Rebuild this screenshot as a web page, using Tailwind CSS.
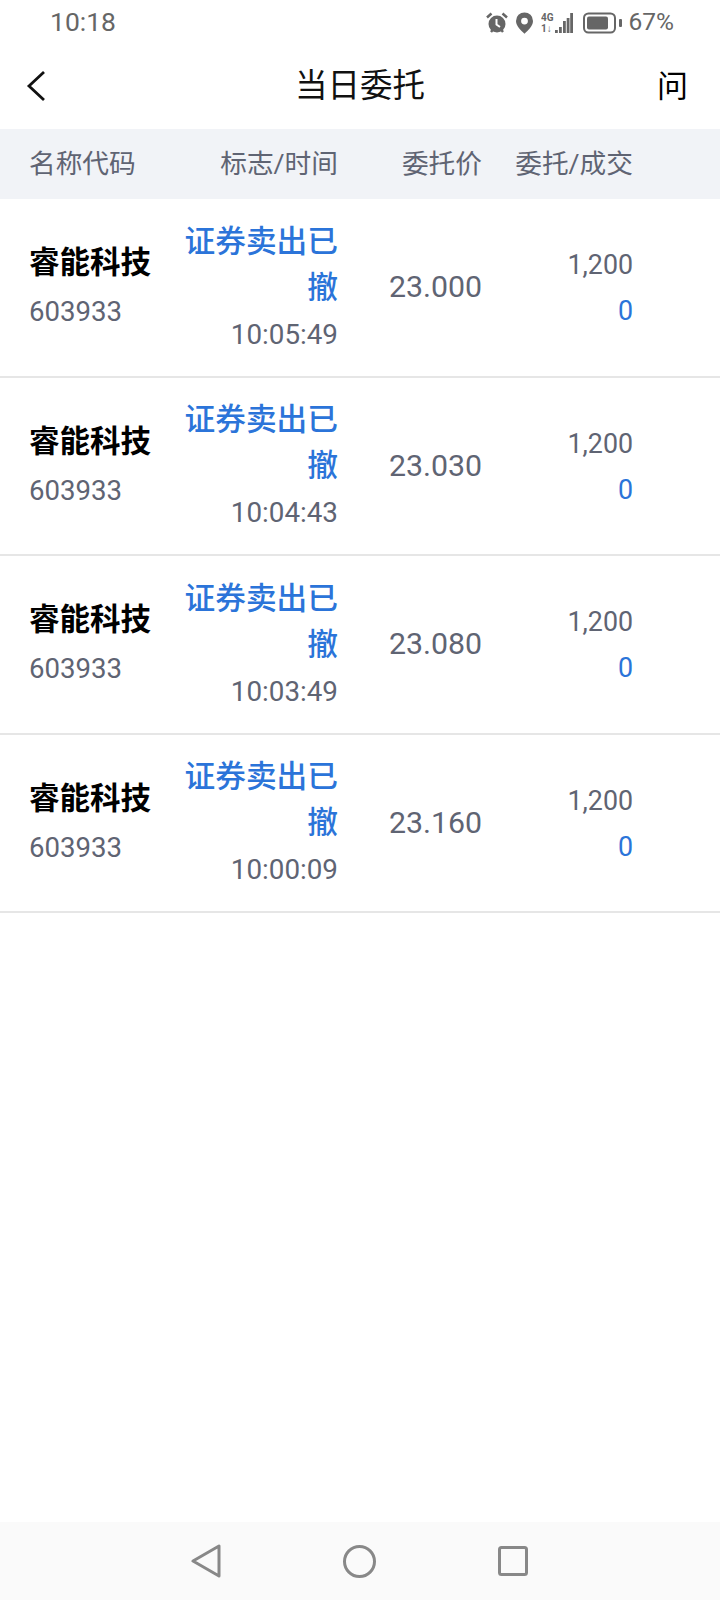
<!DOCTYPE html>
<html lang="en">
  <head>
    <meta charset="UTF-8" />
    <meta name="viewport" content="width=device-width, initial-scale=1.0" />
    <title>当日委托</title>
    <script src="https://cdn.jsdelivr.net/npm/@tailwindcss/browser@4"></script>
  </head>
  <body class="bg-white">
    <div class="w-[720px] h-[1600px] flex flex-col font-['Roboto','Noto_Sans_CJK_SC',sans-serif] text-[#5f6473]">
      <!-- status bar -->
      <div class="h-[45px] flex items-center pl-[50px] pr-[46px] text-[#666666]">
        <span class="text-[26.500px] leading-none">10:18</span>
        <div class="ml-auto flex items-center">
          <svg width="22" height="22" viewBox="1 1 22 22" fill="#666666">
            <circle cx="12" cy="13" r="8.500" />
            <path d="M2 6.500 6.500 2.500M22 6.500 17.500 2.500M6 21l2-2.500M18 21l-2-2.500" stroke="#666666" stroke-width="2.500" fill="none" />
            <path d="M11.500 8v5.500l3.500 2.500" stroke="#ffffff" stroke-width="2" fill="none" />
          </svg>
          <svg class="ml-[8px]" width="17" height="22" viewBox="1 2 16 20" fill="#666666">
            <path fill-rule="evenodd" d="M9 2a8 8 0 0 0-8 8c0 5 5 9 8 12 3-3 8-7 8-12a8 8 0 0 0-8-8Zm0 5a3.200 3.200 0 1 1 0 6.400A3.200 3.200 0 0 1 9 7Z" />
          </svg>
          <svg class="ml-[8px]" width="32" height="22" viewBox="0 0 32 22" fill="#666666">
            <text x="0" y="9" font-size="10" font-weight="700" font-family="Roboto">4G</text>
            <text x="0" y="20" font-size="10" font-weight="700" font-family="Roboto">1↓</text>
            <rect x="14" y="18" width="2.800" height="3" />
            <rect x="18" y="15" width="2.800" height="6" />
            <rect x="22" y="9" width="2.800" height="12" />
            <rect x="25.700" y="6" width="2.800" height="15" />
            <rect x="29.200" y="1" width="2.800" height="20" />
          </svg>
          <svg class="ml-[10px]" width="39" height="22" viewBox="0 0 39 22" fill="none">
            <rect x="1" y="1.500" width="31" height="19" rx="4.500" stroke="#666666" stroke-width="2" />
            <rect x="4" y="4.500" width="21" height="13" rx="2" fill="#666666" />
            <rect x="36" y="7" width="3" height="8" rx="1" fill="#666666" />
          </svg>
          <span class="ml-[7px] text-[24.500px] leading-none">67%</span>
        </div>
      </div>

      <!-- nav -->
      <div class="h-[84px] flex items-center justify-between pl-[26px] pr-[32px] pb-[2px] relative">
        <svg width="20" height="32" viewBox="0 0 20 32" fill="none">
          <path d="M18 2 3 16l15 14" stroke="#111111" stroke-width="2.800" />
        </svg>
        <span class="absolute inset-x-0 text-center text-[32.500px] text-[#111111]">当日委托</span>
        <span class="text-[31px] text-black pt-[2px]">问</span>
      </div>

      <!-- table header -->
      <div class="h-[70px] bg-[#f1f3f7] grid grid-cols-[154px_155px_144px_151px] items-center pl-[29px] text-[26.700px]">
        <span>名称代码</span>
        <span class="text-right">标志/时间</span>
        <span class="text-right">委托价</span>
        <span class="text-right">委托/成交</span>
      </div>

      <!-- rows -->
      <div class="grid grid-cols-[154px_155px_144px_151px] items-center pl-[29px] h-[178.500px] border-b-2 border-[#e6e6e6]">
        <div class="pt-[1px]">
          <div class="text-[30.500px] leading-[46px] font-bold text-black">睿能科技</div>
          <div class="text-[27.600px] leading-[46px] pt-[3px]">603933</div>
        </div>
        <div class="text-right pt-[2px]">
          <div class="text-[30.700px] leading-[46px] font-medium text-[#2b74d9]">证券卖出已撤</div>
          <div class="text-[27.800px] leading-[46px] pt-[1px]">10:05:49</div>
        </div>
        <div class="text-right text-[30.300px] pb-[1px]">23.000</div>
        <div class="text-right text-[26.800px] leading-[46px] pt-[2px]">
          <div>1,200</div>
          <div class="text-[#2b74d9]">0</div>
        </div>
      </div>
      <div class="grid grid-cols-[154px_155px_144px_151px] items-center pl-[29px] h-[178.500px] border-b-2 border-[#e6e6e6]">
        <div class="pt-[1px]">
          <div class="text-[30.500px] leading-[46px] font-bold text-black">睿能科技</div>
          <div class="text-[27.600px] leading-[46px] pt-[3px]">603933</div>
        </div>
        <div class="text-right pt-[2px]">
          <div class="text-[30.700px] leading-[46px] font-medium text-[#2b74d9]">证券卖出已撤</div>
          <div class="text-[27.800px] leading-[46px] pt-[1px]">10:04:43</div>
        </div>
        <div class="text-right text-[30.300px] pb-[1px]">23.030</div>
        <div class="text-right text-[26.800px] leading-[46px] pt-[2px]">
          <div>1,200</div>
          <div class="text-[#2b74d9]">0</div>
        </div>
      </div>
      <div class="grid grid-cols-[154px_155px_144px_151px] items-center pl-[29px] h-[178.500px] border-b-2 border-[#e6e6e6]">
        <div class="pt-[1px]">
          <div class="text-[30.500px] leading-[46px] font-bold text-black">睿能科技</div>
          <div class="text-[27.600px] leading-[46px] pt-[3px]">603933</div>
        </div>
        <div class="text-right pt-[2px]">
          <div class="text-[30.700px] leading-[46px] font-medium text-[#2b74d9]">证券卖出已撤</div>
          <div class="text-[27.800px] leading-[46px] pt-[1px]">10:03:49</div>
        </div>
        <div class="text-right text-[30.300px] pb-[1px]">23.080</div>
        <div class="text-right text-[26.800px] leading-[46px] pt-[2px]">
          <div>1,200</div>
          <div class="text-[#2b74d9]">0</div>
        </div>
      </div>
      <div class="grid grid-cols-[154px_155px_144px_151px] items-center pl-[29px] h-[178.500px] border-b-2 border-[#e6e6e6]">
        <div class="pt-[1px]">
          <div class="text-[30.500px] leading-[46px] font-bold text-black">睿能科技</div>
          <div class="text-[27.600px] leading-[46px] pt-[3px]">603933</div>
        </div>
        <div class="text-right pt-[2px]">
          <div class="text-[30.700px] leading-[46px] font-medium text-[#2b74d9]">证券卖出已撤</div>
          <div class="text-[27.800px] leading-[46px] pt-[1px]">10:00:09</div>
        </div>
        <div class="text-right text-[30.300px] pb-[1px]">23.160</div>
        <div class="text-right text-[26.800px] leading-[46px] pt-[2px]">
          <div>1,200</div>
          <div class="text-[#2b74d9]">0</div>
        </div>
      </div>

      <!-- android nav bar -->
      <div class="mt-auto h-[78px] bg-[#fafafa] flex items-center pl-[191px] gap-[122px]">
        <svg width="30" height="34" viewBox="0 0 30 34" fill="none">
          <path d="M2 17 28 2v30Z" stroke="#888888" stroke-width="3" stroke-linejoin="round" />
        </svg>
        <svg width="33" height="33" viewBox="0 0 33 33" fill="none">
          <circle cx="16.500" cy="16.500" r="15" stroke="#888888" stroke-width="3" />
        </svg>
        <svg width="30" height="30" viewBox="0 0 30 30" fill="none">
          <rect x="1.500" y="1.500" width="27" height="27" rx="2" stroke="#888888" stroke-width="3" />
        </svg>
      </div>
    </div>
  </body>
</html>
